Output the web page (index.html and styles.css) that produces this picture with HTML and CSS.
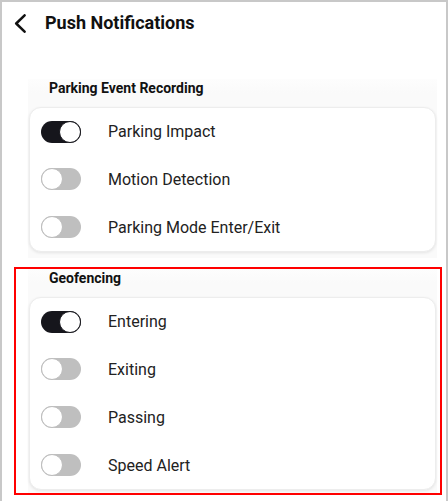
FILE: index.html
```html
<!DOCTYPE html>
<html>
<head>
<meta charset="utf-8">
<link rel="stylesheet" href="styles.css">
</head>
<body>
<div class="app">
  <header class="topbar">
    <svg class="back" width="12" height="19" viewBox="0 0 12 19"><path d="M10.6 1.3 L2.2 9.5 L10.6 17.7" fill="none" stroke="#111" stroke-width="2.5" stroke-linecap="round" stroke-linejoin="round"/></svg>
    <h1 class="title">Push Notifications</h1>
  </header>
  <main class="content">
    <section class="group">
      <h2 class="group-title">Parking Event Recording</h2>
      <div class="card">
        <div class="row"><span class="toggle on"></span><span class="label">Parking Impact</span></div>
        <div class="row"><span class="toggle"></span><span class="label">Motion Detection</span></div>
        <div class="row"><span class="toggle"></span><span class="label">Parking Mode Enter/Exit</span></div>
      </div>
    </section>
    <div class="highlight">
      <section class="group last">
        <h2 class="group-title">Geofencing</h2>
        <div class="card">
          <div class="row"><span class="toggle on"></span><span class="label">Entering</span></div>
          <div class="row"><span class="toggle"></span><span class="label">Exiting</span></div>
          <div class="row"><span class="toggle"></span><span class="label">Passing</span></div>
          <div class="row"><span class="toggle"></span><span class="label">Speed Alert</span></div>
        </div>
      </section>
    </div>
  </main>
</div>
</body>
</html>
```
FILE: styles.css
```css
* { box-sizing: border-box; }
html, body { margin: 0; padding: 0; background: #fff; }
body { font-family: Roboto, "Liberation Sans", sans-serif; color: #1c1c1e; }
.app {
  width: 448px;
  height: 501px;
  border: 2px solid #c8c8c8;
  border-bottom: 0;
  overflow: hidden;
}
.topbar {
  display: flex;
  align-items: center;
  height: 42px;
  padding-left: 12px;
}
.back { display: block; margin-right: 19px; }
.title {
  margin: 0;
  font-size: 18px;
  font-weight: 700;
  color: #111;
  line-height: 22px;
}
.content { padding-top: 35px; }
.group {
  margin: 0 9px 0 26px;
  background: linear-gradient(#fdfdfd, #fafafa 14px);
  padding: 0 1px 6px;
}
.group-title {
  margin: 0;
  padding: 0 0 10px 20px;
  font-size: 14px;
  line-height: 18px;
  font-weight: 700;
  color: #111;
}
.card {
  background: #fff;
  border: 1px solid #ededed;
  border-radius: 12px;
  box-shadow: 0 1px 3px rgba(0,0,0,0.09);
}
.row {
  display: flex;
  align-items: center;
  height: 48px;
  padding-left: 11px;
}
.row:first-child { height: 47px; }
.toggle {
  position: relative;
  width: 40px;
  height: 22px;
  border-radius: 11px;
  background: #bfbfbf;
  flex: none;
}
.toggle::after {
  content: "";
  position: absolute;
  left: 0;
  top: 0;
  width: 22px;
  height: 22px;
  border-radius: 50%;
  background: #fff;
  border: 1.5px solid #bdbdbd;
  box-sizing: border-box;
}
.toggle.on { background: #16161c; }
.toggle.on::after { left: 18px; border-color: #16161c; }
.label {
  margin-left: 27px;
  font-size: 16px;
  color: #222;
}
.highlight {
  margin: 9px 4px 0 12px;
  border: 2px solid #ff0000;
  padding: 0 3px 0 12px;
}
.highlight .group { margin: 0; padding-bottom: 3px; }
```
